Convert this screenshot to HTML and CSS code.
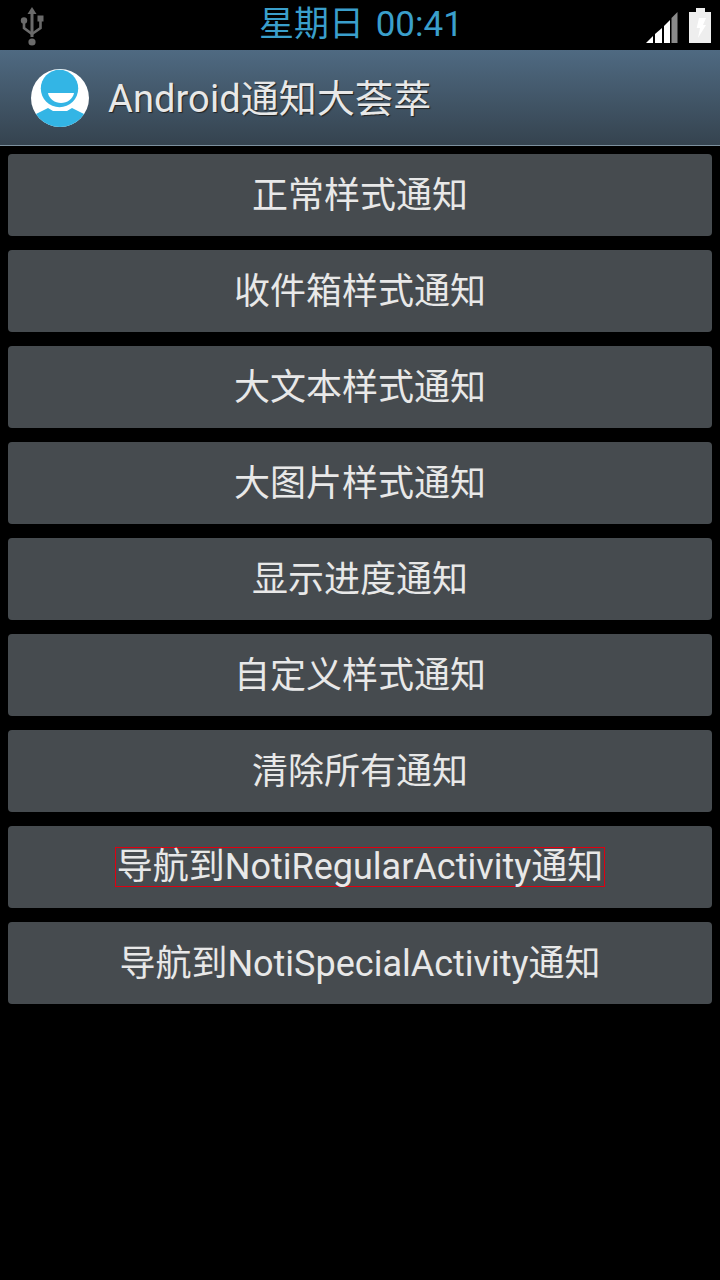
FILE: index.html
```html
<!DOCTYPE html>
<html lang="zh-CN">
<head>
    <meta charset="UTF-8">
    <meta name="viewport" content="width=device-width, initial-scale=1.0">
    <title>Android通知大荟萃</title>
    <link rel="stylesheet" href="styles.css">
</head>
<body>
    <!-- 状态栏 -->
    <div class="status-bar">
        <svg class="usb-icon" width="28" height="40" viewBox="0 0 28 40">
            <path d="M12.500 6h3v24h-3z" fill="#6a6a6a"/>
            <path d="M14 0l4.500 7h-9z" fill="#6a6a6a"/>
            <circle cx="14" cy="35" r="3.600" fill="#6a6a6a"/>
            <circle cx="6" cy="13.500" r="3.200" fill="#6a6a6a"/>
            <path d="M19.500 8.500h6v6h-6z" fill="#6a6a6a"/>
            <path d="M6 14v7l8 6M22.500 14v7l-8.500 6" fill="none" stroke="#6a6a6a" stroke-width="2.600"/>
        </svg>
        <span class="clock">星期日 00:41</span>
        <div class="status-right">
            <svg width="33" height="34" viewBox="0 0 33 34">
                <path d="M1 34l7-7v7z" fill="#fff"/>
                <path d="M10 34v-9l7-6v15z" fill="#fff"/>
                <path d="M19 34v-17l6-6v23z" fill="#fff"/>
                <path d="M26.500 34v-25l6-6v31z" fill="#8a8a8a"/>
            </svg>
            <svg width="22" height="35" viewBox="0 0 22 35">
                <path d="M7 0h9v4h6v31H0V4h7z" fill="#eee"/>
                <path d="M10 10h7l-3 7h3l-8 13 2-10H7.700z" fill="#fff"/>
            </svg>
        </div>
    </div>

    <!-- 标题栏 -->
    <header class="action-bar">
        <svg class="app-icon" width="60" height="60" viewBox="0 0 60 60">
            <defs>
                <clipPath id="round"><circle cx="30" cy="30" r="29"/></clipPath>
            </defs>
            <circle cx="30" cy="30" r="29" fill="#fff"/>
            <g clip-path="url(#round)">
                <path d="M0 60V49l18-9 5 3h14l5-3 18 9v11z" fill="#33b5e5"/>
            </g>
            <circle cx="29.500" cy="20.500" r="18.700" fill="#33b5e5"/>
            <path d="M18 25h26c-1 6-7 10-13 10S19 31 18 25z" fill="#fff"/>
        </svg>
        <h1 class="app-title">Android通知大荟萃</h1>
    </header>

    <!-- 按钮列表 -->
    <main class="button-list">
        <button class="noti-btn">正常样式通知</button>
        <button class="noti-btn">收件箱样式通知</button>
        <button class="noti-btn">大文本样式通知</button>
        <button class="noti-btn">大图片样式通知</button>
        <button class="noti-btn">显示进度通知</button>
        <button class="noti-btn">自定义样式通知</button>
        <button class="noti-btn">清除所有通知</button>
        <button class="noti-btn noti-btn-outlined"><span class="outlined">导航到NotiRegularActivity通知</span></button>
        <button class="noti-btn">导航到NotiSpecialActivity通知</button>
    </main>
</body>
</html>
```

FILE: styles.css
```css
/* 全体のスタイル */
body {
    margin: 0;
    padding: 0;
    width: 720px;
    height: 1280px;
    overflow: hidden;
    background-color: #000;
    font-family: 'Roboto', 'Noto Sans CJK SC', sans-serif;
    color: #e8e8e8;
}

/* 状态栏 */
.status-bar {
    height: 50px;
    display: flex;
    align-items: center;
    justify-content: space-between;
    padding: 0 9px 0 18px;
    position: relative;
}

.usb-icon {
    margin-top: 3px;
}

.clock {
    position: absolute;
    left: 259px;
    top: 0;
    line-height: 50px;
    font-size: 35px;
    word-spacing: 3px;
    color: #3a9fcb;
}

.status-right {
    display: flex;
    align-items: flex-end;
    gap: 11px;
    margin-top: 1px;
}

/* 标题栏 */
.action-bar {
    height: 95px;
    display: flex;
    align-items: center;
    padding-left: 30px;
    gap: 18px;
    background: linear-gradient(to bottom, #4f6a82, #35434f);
    border-bottom: 1px solid #7d909e;
}

.app-title {
    margin: 0 0 4px;
    font-size: 38px;
    font-weight: normal;
    letter-spacing: 0.1px;
    color: #e8e8e8;
    text-shadow: 1px 1px 1px #222;
}

/* 按钮 */
.button-list {
    display: flex;
    flex-direction: column;
    gap: 14px;
    padding: 8px;
}

.noti-btn {
    height: 82px;
    padding: 0 0 6px;
    border: none;
    border-radius: 4px;
    background-color: #464b4f;
    color: #e8e8e8;
    font-family: inherit;
    font-size: 36px;
    text-align: center;
}

.noti-btn-outlined {
    padding: 0;
}

.outlined {
    display: block;
    width: fit-content;
    margin: 0 auto;
    height: 38px;
    line-height: 38px;
    padding: 0 1px;
    border: 1px solid #e00010;
}
```
